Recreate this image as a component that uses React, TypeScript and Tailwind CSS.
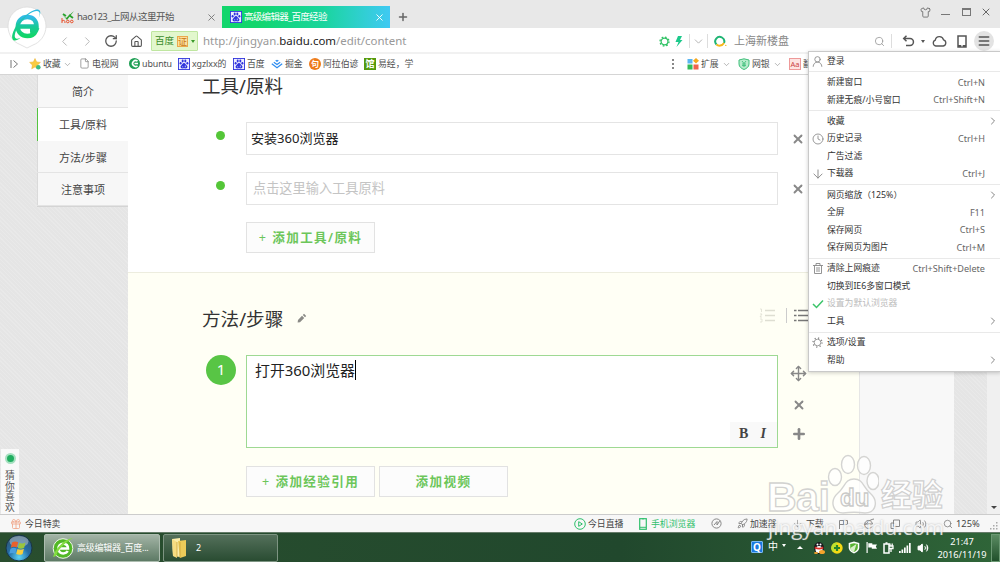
import type { ReactNode } from 'react'
import {
  ArrowDown,
  ChevronDown,
  ChevronLeft,
  ChevronRight,
  Clock,
  File,
  Gift,
  House,
  Menu,
  Move,
  Plus,
  Rocket,
  RotateCw,
  Search,
  Shirt,
  UserRound,
  Volume2,
  X,
} from 'lucide-react'

interface MenuEntry {
  label: string
  keys?: string
  icon?: ReactNode
  sub?: boolean
  muted?: boolean
}

const MENU: MenuEntry[][] = [
  [{ label: '登录', icon: <UserRound size={13} strokeWidth={1.6} /> }],
  [
    { label: '新建窗口', keys: 'Ctrl+N' },
    { label: '新建无痕/小号窗口', keys: 'Ctrl+Shift+N' },
  ],
  [
    { label: '收藏', sub: true },
    { label: '历史记录', keys: 'Ctrl+H', icon: <Clock size={12} strokeWidth={1.7} /> },
    { label: '广告过滤' },
    { label: '下载器', keys: 'Ctrl+J', icon: <ArrowDown size={14} strokeWidth={1.6} /> },
  ],
  [
    { label: '网页缩放（125%）', sub: true },
    { label: '全屏', keys: 'F11' },
    { label: '保存网页', keys: 'Ctrl+S' },
    { label: '保存网页为图片', keys: 'Ctrl+M' },
  ],
  [
    {
      label: '清除上网痕迹',
      keys: 'Ctrl+Shift+Delete',
      icon: (
        <svg width="10" height="11" viewBox="0 0 10 11" fill="none" stroke="currentColor" strokeWidth="0.9">
          <path d="M0 2.500h10M3 2.500V.5h4v2M1.500 2.500v8h7v-8M4 4v5M6 4v5" />
        </svg>
      ),
    },
    { label: '切换到IE6多窗口模式' },
    {
      label: '设置为默认浏览器',
      muted: true,
      icon: (
        <svg width="12" height="10" viewBox="0 0 12 10" fill="none" stroke="#3cc46a" strokeWidth="1.5">
          <path d="M1 5l3.5 3.5L11 1.5" />
        </svg>
      ),
    },
    { label: '工具', sub: true },
  ],
  [
    { label: '选项/设置', icon: <GearOutline /> },
    { label: '帮助', sub: true },
  ],
]

function GearOutline() {
  return (
    <svg width="11" height="11" viewBox="0 0 12 12" fill="none" stroke="currentColor">
      <circle cx="6" cy="6" r="3.6" strokeWidth="0.9" />
      <circle cx="6" cy="6" r="4.9" strokeWidth="1.5" strokeDasharray="1.3 2.55" />
    </svg>
  )
}

function Paw({ size = 12 }: { size?: number }) {
  return (
    <svg width={size} height={size} viewBox="0 0 12 12" className="shrink-0">
      <rect width="12" height="12" fill="#2f34dc" />
      <rect x="0.9" y="0.9" width="10.2" height="10.2" fill="#eef" />
      <g fill="#2f34dc">
        <ellipse cx="2.6" cy="5.2" rx="1" ry="1.3" />
        <ellipse cx="4.7" cy="3" rx="1" ry="1.4" />
        <ellipse cx="7.3" cy="3" rx="1" ry="1.4" />
        <ellipse cx="9.4" cy="5.2" rx="1" ry="1.3" />
        <path d="M6 5C4.5 5 4.3 6.7 3.2 7.5c-1.300 1-.6 3 1 2.900 1.200-.1 2.400-.1 3.600 0 1.600.1 2.300-1.900 1-2.900C7.700 6.700 7.500 5 6 5z" />
      </g>
      <path d="M4.700 8.300v1M7.300 7.600v1.700" stroke="#fff" strokeWidth="0.7" />
    </svg>
  )
}

function BrowserLogo() {
  return (
    <svg width="42" height="44" viewBox="0 0 42 44" className="absolute top-[5px] left-[6px] z-10">
      <defs>
        <linearGradient id="e" x1="0" y1="0" x2="0" y2="1">
          <stop offset="0" stopColor="#2fb9e8" />
          <stop offset="0.5" stopColor="#17c999" />
          <stop offset="1" stopColor="#12d568" />
        </linearGradient>
      </defs>
      <path
        d="M21 2a19 19 0 0 1 19 19c0 10-7 17-13 19l-6 3-7-3.500C7 37 2 29.500 2 21A19 19 0 0 1 21 2z"
        fill="#fff"
        stroke="#dadada"
        strokeWidth="0.8"
      />
      <path
        d="M12.500 21.500h18c0-6-3.500-9.500-9.200-9.500-5.500 0-9.500 4.200-9.500 9.700 0 5.500 4 9.300 9.500 9.300 4.200 0 7.200-2 8.700-5.500h-6"
        fill="none"
        stroke="url(#e)"
        strokeWidth="4.500"
      />
      <path
        d="M32.500 13c2-4 1.500-7-1.500-7-5 0-13 6-18 14-4 6.500-5.500 12-3 13.500 1 .6 2.500.3 4.500-.7-3.500 3.200-7 3.700-8 1.200-1.500-3.500 1.500-11 7-17.500C20 9 28 3.500 32 4.500c3 .8 3 4.500.5 8.500z"
        fill="url(#e)"
      />
    </svg>
  )
}

function TabBar() {
  return (
    <div className="flex h-[28px] items-end bg-[#e8e8e8] text-[9.500px] leading-[22px] text-[#555]">
      <div className="ml-[55px] flex h-[22px] w-[167px] items-center pl-[6px]">
        <svg width="14" height="13" viewBox="0 0 14 13">
          <path d="M1 3l4 4L13 0 6 9z" fill="#29a22d" />
          <path d="M2 3l3 2M8 4l4 3" stroke="#29a22d" strokeWidth="1.800" />
          <path
            d="M1 7v5M1 10q3-2 3 2M5.500 10.500a1.300 1.300 0 1 0 2.600 0 1.300 1.300 0 1 0-2.600 0M9.500 10.500a1.300 1.300 0 1 0 2.600 0 1.300 1.300 0 1 0-2.600 0"
            stroke="#e8502a"
            fill="none"
          />
        </svg>
        <span className="ml-[2px] grow tracking-[-0.500px]">hao123_上网从这里开始</span>
        <X size={11} strokeWidth={2} className="mr-[5px] text-[#777]" />
      </div>
      <div className="flex h-[22px] w-[168px] items-center bg-linear-to-r from-[#12d66c] from-20% via-[#19d59c] via-60% to-[#3fc9f3] pl-[8px] text-white">
        <Paw />
        <span className="ml-[2px] grow tracking-[-0.700px]">高级编辑器_百度经验</span>
        <X size={11} strokeWidth={2} className="mr-[5px]" />
      </div>
      <Plus size={12} strokeWidth={3} className="mb-[5px] ml-[7px] text-[#666]" />
      <div className="mb-[10px] ml-auto flex items-center text-[#666]">
        <Shirt size={11} strokeWidth={1.800} />
        <span className="mt-[4px] ml-[10px] h-px w-[9px] bg-[#777]" />
        <span className="ml-[12px] h-[8px] w-[9px] border border-t-2 border-[#777]" />
        <X size={12} strokeWidth={2} className="mr-[8px] ml-[9px]" />
      </div>
    </div>
  )
}

function AddressBar() {
  return (
    <div className="flex h-[24px] items-center bg-white pt-[2px] text-[#555]">
      <ChevronLeft size={15} strokeWidth={1.600} className="ml-[57px] text-[#bbb]" />
      <ChevronRight size={15} strokeWidth={1.600} className="ml-[8px] text-[#bbb]" />
      <RotateCw size={14} strokeWidth={2.200} className="ml-[9px]" />
      <House size={13} strokeWidth={2} className="ml-[12px]" />
      <div className="ml-[8px] flex h-[20px] w-[47px] items-center rounded-[1px] border border-[#bfe6a0] bg-[#e2f7cd] pl-[3px] text-[9.500px] text-[#3a8a2b]">
        百度
        <span className="ml-[3px] h-[11px] w-[11px] border border-[#eba94c] bg-[#fcdf9c] text-center text-[9px] leading-[9px] text-[#c87813]">证</span>
        <span className="ml-[3px] border-x-[2px] border-t-[3px] border-x-transparent border-t-[#3a9a2b]" />
      </div>
      <div className="ml-[5px] w-[456px] text-[11.450px] leading-[22px] text-[#999]">
        http://jingyan.<span className="text-[#222]">baidu.com</span>/edit/content
      </div>
      <div className="w-[11px] text-[#2ec263]">
        <svg width="11" height="11" viewBox="0 0 11 11" fill="none" stroke="currentColor">
          <circle cx="5.500" cy="5.500" r="3.400" strokeWidth="1.200" />
          <circle cx="5.500" cy="5.500" r="4.500" strokeWidth="1.300" strokeDasharray="1.700 1.830" />
        </svg>
      </div>
      <svg width="8" height="11" viewBox="0 0 8 11" className="ml-[5px]">
        <path d="M3 0h4L5 4h2.500L1.500 11 3.500 6H.5z" fill="#1cc98b" />
      </svg>
      <span className="ml-[6px] h-[14px] w-px bg-[#ddd]" />
      <ChevronDown size={13} strokeWidth={1.600} className="ml-[2px] text-[#aaa]" />
      <span className="ml-[2px] h-[14px] w-px bg-[#ddd]" />
      <svg width="14" height="12" viewBox="0 0 14 12" className="ml-[6px]" fill="none" strokeWidth="2">
        <path d="M2.500 9.500A4.500 4.500 0 1 1 10 8" stroke="#1fb574" />
        <path d="M2.500 9.500c2 1.800 5.500 1.600 7.500-1.500" stroke="#f6b71b" />
        <circle cx="11.800" cy="10.400" r="0.700" fill="#f6b71b" stroke="none" />
      </svg>
      <span className="ml-[6px] w-[141px] text-[11px] text-[#888]">上海新楼盘</span>
      <Search size={11} strokeWidth={1.800} className="ml-[-1px] text-[#999]" />
      <span className="ml-[6px] h-[14px] w-px bg-[#ddd]" />
      <svg width="13" height="12" viewBox="0 0 13 12" className="ml-[10px]" fill="none" stroke="currentColor" strokeWidth="1.500">
        <path d="M2 3.500h6a3.400 3.400 0 0 1 0 6.900H4M4.500 0.800L1.700 3.500l2.800 2.800" />
      </svg>
      <span className="ml-[6px] border-x-[2px] border-t-[3px] border-x-transparent border-t-[#555]" />
      <svg width="15" height="12" viewBox="0 0 15 12" className="ml-[7px]" fill="none" stroke="currentColor" strokeWidth="1.300">
        <path d="M3.800 11A3 3 0 0 1 3.300 5.200a4.200 4.200 0 0 1 8.200-.4A3.200 3.200 0 0 1 11.300 11z" />
      </svg>
      <svg width="10" height="13" viewBox="0 0 10 13" className="ml-[10px]" fill="none" stroke="currentColor">
        <rect x="1" y="1" width="8" height="11" strokeWidth="1.500" />
        <path d="M1 11h8" strokeWidth="2" />
        <path d="M4 10.800h2" stroke="#fff" />
      </svg>
      <span className="ml-[7px] flex size-[20px] items-center justify-center rounded-full bg-[#e3e3e3]">
        <Menu size={14} strokeWidth={2.600} />
      </span>
    </div>
  )
}

function Bookmark({ icon, children }: { icon: ReactNode; children: ReactNode }) {
  return (
    <>
      <span className="flex w-[12px] shrink-0 justify-center">{icon}</span>
      <span className="ml-[2px] shrink-0 whitespace-nowrap">{children}</span>
    </>
  )
}

function Bookmarks() {
  return (
    <div className="flex h-[23px] items-center border-t-2 border-b border-t-[#f1f1f1] border-b-[#d5d5d5] bg-white text-[8.900px] text-[#505050]">
      <svg width="9" height="10" viewBox="0 0 9 10" className="ml-[10px]" fill="none" stroke="#777">
        <path d="M1 1v8M3.500 1.500L7.500 5l-4 3.500" />
      </svg>
      <span className="ml-[10px] flex w-[34px] items-center">
        <Bookmark
          icon={
            <svg width="12" height="12" viewBox="0 0 12 12">
              <path d="M6 .5l1.600 3.400 3.800.5-2.800 2.600.7 3.800L6 9l-3.300 1.800.7-3.800L.6 4.400l3.800-.5z" fill="#f9cb42" stroke="#e6ae2c" strokeWidth=".5" />
              <circle cx="9.300" cy="9.200" r="2.300" fill="#3dbb86" />
            </svg>
          }
        >
          收藏
        </Bookmark>
      </span>
      <ChevronDown size={9} strokeWidth={1.600} className="mr-[6px] shrink-0 text-[#888]" />
      <span className="flex w-[50px] items-center">
        <Bookmark icon={<File size={11} strokeWidth={1.500} className="text-[#777]" />}>电视网</Bookmark>
      </span>
      <span className="flex w-[50px] items-center tracking-[-0.100px]">
        <Bookmark
          icon={
            <svg width="11" height="11" viewBox="0 0 11 11">
              <circle cx="5.500" cy="5.500" r="5.500" fill="#1f9f54" />
              <path d="M8.500 3.200A3 3 0 1 0 8.500 7.800M5.500 5.500h3.500" stroke="#fff" strokeWidth="1.600" fill="none" />
            </svg>
          }
        >
          ubuntu
        </Bookmark>
      </span>
      <span className="flex w-[55px] items-center tracking-[-0.080px]">
        <Bookmark icon={<Paw />}>xgzlxx的</Bookmark>
      </span>
      <span className="flex w-[38px] items-center">
        <Bookmark icon={<Paw />}>百度</Bookmark>
      </span>
      <span className="flex w-[38px] items-center">
        <Bookmark
          icon={
            <svg width="12" height="10" viewBox="0 0 12 10" fill="none" stroke="#2d8cf0" strokeWidth="1.200">
              <path d="M4.700 1.200L6 2.300l1.300-1.100M2.800 3.200L6 5.500l3.200-2.300M.8 4.800L6 8.800l5.200-4" />
            </svg>
          }
        >
          掘金
        </Bookmark>
      </span>
      <span className="flex w-[55px] items-center">
        <Bookmark icon={<span className="size-[12px] rounded-full bg-[#ee7c1c] text-center text-[8px] leading-[12px] font-bold text-white">句</span>}>
          阿拉伯谚
        </Bookmark>
      </span>
      <span className="flex items-center">
        <Bookmark icon={<span className="size-[12px] bg-[#559a0c] text-center text-[9px] leading-[12px] font-bold text-white">馆</span>}>
          易经，学
        </Bookmark>
      </span>
      <span className="mr-[13px] ml-auto flex flex-col gap-[2px]">
        <i className="size-[2px] bg-[#888]" />
        <i className="size-[2px] bg-[#888]" />
        <i className="size-[2px] bg-[#888]" />
      </span>
      <span className="flex w-[33px] items-center">
        <Bookmark
          icon={
            <svg width="12" height="12" viewBox="0 0 12 12">
              <rect x=".5" y="1" width="5" height="4.500" fill="#59b6f2" />
              <rect x=".5" y="6.500" width="5" height="5" fill="#33bb59" />
              <rect x="6.500" y="6.500" width="5" height="5" fill="#f0624d" />
              <path d="M9 0l3 2.800-3 2.800-3-2.800z" fill="#f5a91d" />
            </svg>
          }
        >
          扩展
        </Bookmark>
      </span>
      <ChevronDown size={9} strokeWidth={1.600} className="mr-[7px] ml-[2px] text-[#888]" />
      <span className="flex w-[33px] items-center">
        <Bookmark
          icon={
            <svg width="12" height="12" viewBox="0 0 12 12" fill="#b8eccc" stroke="#3fbf7a">
              <path d="M6 .8L11 2v4c0 3-2.500 4.500-5 5.500C3.500 10.500 1 9 1 6V2z" />
              <path d="M4 3l2 2.500L8 3M6 5.500V9M4 6h4M4 7.600h4" fill="none" strokeWidth=".9" />
            </svg>
          }
        >
          网银
        </Bookmark>
      </span>
      <ChevronDown size={9} strokeWidth={1.600} className="mr-[7px] ml-[2px] text-[#888]" />
      <span className="mr-[179px] flex w-[32px] items-center">
        <Bookmark icon={<span className="h-[12px] w-[12px] border border-[#e99] bg-[#fde4e2] text-center text-[7.500px] leading-[10px] text-[#c44]">Aa</span>}>
          翻译
        </Bookmark>
      </span>
    </div>
  )
}

const TEXTURE = 'bg-[#e5e5e5] bg-[repeating-linear-gradient(45deg,#ffffff24_0_1px,transparent_1px_3px)]'

const NAV = ['简介', '工具/原料', '方法/步骤', '注意事项']

function SideNav() {
  return (
    <aside className={`relative w-[128px] shrink-0 pl-[37px] ${TEXTURE}`}>
      <div className="border-b border-[#d4d4d4] text-center text-[11px] text-[#444]">
        {NAV.map((item) => (
          <div
            key={item}
            className={`flex h-[32.750px] leading-[33px] ${
              item === '工具/原料' ? 'bg-white' : 'border-b border-[#e4e4e4] bg-[#f7f7f7]'
            }`}
          >
            <i className={`w-px ${item === '工具/原料' ? 'bg-[#54c440]' : 'bg-[#dadada]'}`} />
            <span className="grow">{item}</span>
          </div>
        ))}
      </div>
      <div className="absolute bottom-0 left-[1px] flex h-[65px] w-[18px] flex-col items-center bg-[#f9f9f9] text-[#555]">
        <span className="mt-[4px] size-[11px] shrink-0 rounded-full border-2 border-[#a6e0c0] bg-[#21ae60]" />
        <span className="mt-[7px] w-[10px] text-[9.800px] leading-[10.500px]">猜你喜欢</span>
      </div>
    </aside>
  )
}

function GreenButton({ children }: { children: ReactNode }) {
  return (
    <div className="flex h-[31px] w-[129px] items-center justify-center border border-[#e2e2e2] bg-[#fcfcfc] pt-[1px] text-[12.600px] font-semibold tracking-[1.350px] whitespace-pre text-[#6cc65a]">
      {children}
    </div>
  )
}

function AddLabel({ children }: { children: ReactNode }) {
  return (
    <>
      <span className="mr-[5px] font-normal">+</span>
      {children}
    </>
  )
}

function MaterialRow({ children }: { children: ReactNode }) {
  return (
    <div className="flex items-center">
      <span className="mt-[-7px] size-[9px] rounded-full bg-[#54c638]" />
      <div className="ml-[21px] flex h-[33px] w-[532px] items-center border border-[#e4e4e4] pl-[4px] text-[13.050px]">{children}</div>
      <X size={14} strokeWidth={3.200} className="ml-[13px] text-[#888]" />
    </div>
  )
}

function Editor() {
  return (
    <main className="flex w-[732px] shrink-0 flex-col border-r border-[#e6e6e6] bg-white">
      <section className="h-[197px] pl-[74px]">
        <h2 className="text-[18.500px] leading-[22px] text-[#333]">工具/原料</h2>
        <div className="mt-[25px] flex flex-col gap-[17px] pl-[14px]">
          <MaterialRow>
            <span className="text-[#222]">安装360浏览器</span>
          </MaterialRow>
          <MaterialRow>
            <span className="pl-[2px] text-[13.200px] text-[#c4c4c4]">点击这里输入工具原料</span>
          </MaterialRow>
        </div>
        <div className="mt-[17px] ml-[44px]">
          <GreenButton>
            <AddLabel>添加工具/原料</AddLabel>
          </GreenButton>
        </div>
      </section>
      <section className="grow border-t border-[#ededdf] bg-[#fffff5] pl-[74px]">
        <div className="mt-[34px] flex h-[24px] items-center">
          <h2 className="text-[18.600px] leading-[24px] text-[#333]">方法/步骤</h2>
          <svg width="10" height="10" viewBox="0 0 10 10" className="mt-[-2px] ml-[14px]" fill="#8a8a86">
            <path d="M7 .8l2.200 2.200-1.200 1.200L5.800 2zM5 2.800L7.200 5 3 9.200l-2.400.4L1 7z" />
          </svg>
          <svg width="17" height="15" viewBox="0 0 17 15" className="mt-[-8px] ml-auto" stroke="#deded2" fill="none">
            <path d="M6 2.500h10M6 7.500h10M6 12.500h10" strokeWidth="1.500" />
            <path d="M1 1h1.500v3M1 6h2L1 9h2M1 11h2v3H1" strokeWidth=".8" />
          </svg>
          <span className="mt-[-8px] ml-[10px] h-[15px] w-px bg-[#ccc]" />
          <svg width="15" height="15" viewBox="0 0 15 15" className="mt-[-8px] mr-[50px] ml-[7px]" stroke="#777">
            <path d="M0 2.500h2.500M4 2.500h11M0 7.500h2.500M4 7.500h11M0 12.500h2.500M4 12.500h11" strokeWidth="1.500" />
          </svg>
        </div>
        <div className="mt-[24px] flex">
          <span className="ml-[4px] flex size-[30px] items-center justify-center rounded-full bg-[#58c545] pb-[1px] text-[15px] text-white">1</span>
          <div className="ml-[10px] flex h-[93px] w-[532px] flex-col border border-[#9ed993] bg-white">
            <div className="flex h-[28px] items-center pl-[8px] text-[14.900px] text-[#222]">
              打开360浏览器
              <span className="h-[20px] w-px bg-black" />
            </div>
            <div className="mt-auto flex h-[25px] w-[47px] items-center justify-center gap-[12px] self-end bg-[#f9f9f9] pr-[2px] pb-[2px] font-['Liberation_Serif',serif] text-[14px] font-bold text-[#444]">
              <span>B</span>
              <span className="italic">I</span>
            </div>
          </div>
          <div className="ml-[12px] flex flex-col items-center text-[#888]">
            <Move size={17} strokeWidth={2} className="mt-[10px]" />
            <X size={14} strokeWidth={3.200} className="mt-[16px]" />
            <Plus size={16} strokeWidth={4} className="mt-[14px]" />
          </div>
        </div>
        <div className="mt-[18px] ml-[44px] flex gap-[4px]">
          <GreenButton>
            <AddLabel>添加经验引用</AddLabel>
          </GreenButton>
          <GreenButton>添加视频</GreenButton>
        </div>
      </section>
    </main>
  )
}

function BrowserMenu() {
  return (
    <div className="absolute top-[51px] left-[808px] z-20 h-[321px] w-[193px] border border-[#c9c9c9] bg-white text-[8.800px] text-[#333] shadow-[0_1px_4px_rgba(0,0,0,0.200)]">
      {MENU.map((group, i) => (
        <div key={group[0].label} className={i ? 'mt-[1.400px] border-t border-[#e9e9e9] pt-[1.400px]' : 'pt-[0.600px]'}>
          {group.map((entry) => (
            <div key={entry.label} className={`flex h-[17.500px] items-center ${entry.muted ? 'text-[#bbb]' : ''}`}>
              <span className="flex w-[18px] shrink-0 justify-center pr-[1px] text-[#888]">{entry.icon}</span>
              <span className="grow whitespace-nowrap">{entry.label}</span>
              {entry.keys && <span className="mr-[15px] text-[9.100px] text-[#666]">{entry.keys}</span>}
              {entry.sub && <ChevronRight size={12} strokeWidth={1.800} className="mr-[1px] text-[#777]" />}
            </div>
          ))}
        </div>
      ))}
    </div>
  )
}

function StatusBar() {
  return (
    <div className="flex h-[18px] items-center border-t border-[#ccc] bg-[#f7f7f7] text-[8.900px] text-[#444]">
      <Gift size={12} strokeWidth={1.600} className="ml-[10px] text-[#f0a183]" />
      <span className="ml-[3px] w-[549px]">今日特卖</span>
      <svg width="12" height="12" viewBox="0 0 12 12" fill="none" stroke="#2fbf6c">
        <circle cx="6" cy="6" r="5.300" />
        <path d="M4.700 3.700L8.300 6 4.700 8.300z" />
      </svg>
      <span className="ml-[2px] w-[51px]">今日直播</span>
      <svg width="8" height="12" viewBox="0 0 8 12" fill="none" stroke="#2fbf6c">
        <rect x=".7" y=".7" width="6.600" height="10.600" strokeWidth="1.200" />
        <path d="M1 9.300h6M3 .8h2" />
      </svg>
      <span className="ml-[4px] w-[60px] text-[#2fbf6c]">手机浏览器</span>
      <svg width="11" height="11" viewBox="0 0 11 11" fill="none" stroke="#888">
        <circle cx="5.500" cy="5.500" r="4.600" />
        <path d="M3 7l3-3.500V7l3-4.500" />
      </svg>
      <Rocket size={11} strokeWidth={1.700} className="ml-[15px] text-[#777]" />
      <span className="ml-[2px] w-[42px]">加速器</span>
      <ArrowDown size={11} strokeWidth={1.700} className="text-[#999]" />
      <span className="ml-[3px] w-[32px]">下载</span>
      <div className="flex grow items-center gap-[15px] text-[#888]">
        <svg width="10" height="10" viewBox="0 0 10 10" fill="none" stroke="currentColor">
          <path d="M1.500 10V1.500h8v4h-8M5.500 1.500v4" />
        </svg>
        <svg width="12" height="11" viewBox="0 0 12 11" fill="none" stroke="currentColor">
          <path d="M2 6h7.500a4 4 0 1 0-.5 2.500M1 10C0 8 6 1.500 11 1" />
        </svg>
        <svg width="10" height="10" viewBox="0 0 10 10" fill="none" stroke="currentColor">
          <path d="M3.500 1h6v6.500h-6zM3.500 4H1v5.500h3" />
        </svg>
        <Volume2 size={12} strokeWidth={1.700} />
      </div>
      <Search size={10} strokeWidth={1.800} className="text-[#777]" />
      <span className="ml-[3px] w-[34px] text-[9.300px]">125%</span>
      <svg width="8" height="8" viewBox="0 0 8 8" className="mt-[4px] mr-[2px]" fill="#aaa">
        <path d="M6 0h1.500v1.500H6zM3 3h1.500v1.500H3zM6 3h1.500v1.500H6zM0 6h1.500v1.500H0zM3 6h1.500v1.500H3zM6 6h1.500v1.500H6z" />
      </svg>
    </div>
  )
}

function Taskbar() {
  return (
    <div className="flex h-[30px] items-center border-t border-[#657b69] bg-linear-to-r from-[#294e2e] via-[#21482d] via-62% to-[#2f6538] text-[9px] text-white">
      <svg width="28" height="28" viewBox="0 0 28 28" className="ml-[5px]">
        <defs>
          <radialGradient id="orb" cx="0.5" cy="0.85" r="0.8">
            <stop offset="0" stopColor="#5dd3f3" />
            <stop offset="0.5" stopColor="#236da8" />
            <stop offset="1" stopColor="#335670" />
          </radialGradient>
        </defs>
        <circle cx="14" cy="14" r="13" fill="url(#orb)" stroke="#183545" />
        <ellipse cx="14" cy="7.500" rx="9.500" ry="5.500" fill="#fff" opacity="0.350" />
        <path d="M7 8.500c2-1.300 4-1.300 6.200-.2l-1.400 5.200c-2-1-4-.9-6 .2z" fill="#e9612c" />
        <path d="M14.200 8.700c2 1 4 1 6.300-.2l-1.300 5.200c-2.200 1.200-4.400 1.200-6.400.2z" fill="#9ac53d" />
        <path d="M5.500 14.800c2-1.200 4-1.200 6-.2l-1.300 5c-2-1-4-.9-6 .2z" fill="#4aa0e0" />
        <path d="M12.500 15c2 1 4.300 1 6.400-.2l-1.300 5.200c-2.200 1.200-4.400 1-6.400 0z" fill="#f8cd3c" />
      </svg>
      <div className="ml-[11px] flex h-[28px] w-[116px] items-center rounded-[2px] border border-[#adbdb0] bg-linear-to-b from-[#a3b4a6] to-[#5d7a65] pl-[7px]">
        <svg width="22" height="22" viewBox="0 0 22 22">
          <circle cx="11" cy="11.500" r="9.800" fill="#52b826" stroke="#eef7e9" />
          <path d="M6.500 11.500h9.500c0-3-2-4.800-4.700-4.800-3 0-4.900 2-4.900 4.800s2 4.900 4.900 4.900c2 0 3.600-.9 4.400-2.400" fill="none" stroke="#fff" strokeWidth="2.500" />
          <path d="M1 20C3 12 12 2 21 1c-5 3-14 9-17 18z" fill="#83dc40" />
        </svg>
        <span className="ml-[3px] tracking-[-0.250px]">高级编辑器_百度...</span>
      </div>
      <div className="ml-[3px] flex h-[28px] w-[115px] items-center rounded-[2px] border border-[#7d9482] bg-linear-to-b from-[#54705b] to-[#294c32] pl-[7px]">
        <svg width="17" height="22" viewBox="0 0 17 22">
          <path d="M1 2l8-1v19l-7-1z" fill="#fbedaa" />
          <path d="M7 4l8-1v16l-6 2z" fill="#eccb59" />
          <path d="M1 2l5 3v16l-4-2z" fill="#f6dc81" />
          <path d="M9 5v16M6 5v15" stroke="#c79e34" strokeWidth=".7" />
        </svg>
        <span className="ml-[8px]">2</span>
      </div>
      <span className="mr-[5px] mb-[2px] ml-auto size-[12px] rounded-[1px] border border-[#77b9f3] bg-[#1a79df] text-center text-[10px] leading-[10px] font-bold">Q</span>
      <span className="mr-[4px] mb-[2px] text-[10px]">中</span>
      <span className="mr-[11px] mb-[4px] border-x-[2px] border-t-[3px] border-x-transparent border-t-white" />
      <span className="mr-[10px] border-x-[3px] border-b-[3px] border-x-transparent border-b-white" />
      <div className="mr-[8px] flex items-center gap-[5.700px]">
        <svg width="12" height="13" viewBox="0 0 12 13">
          <ellipse cx="6" cy="7" rx="5" ry="6" fill="#18181c" />
          <ellipse cx="6" cy="8.500" rx="3.500" ry="3.500" fill="#fff" />
          <path d="M2 5.500q4 2.500 8 0l.5 2q-4 2-9 0z" fill="#dd3028" />
          <ellipse cx="9" cy="11" rx="3" ry="2" fill="#f5a42b" />
          <ellipse cx="3" cy="12" rx="2" ry="1" fill="#f5a42b" />
          <circle cx="4.500" cy="3.500" r="1" fill="#fff" />
          <circle cx="7.500" cy="3.500" r="1" fill="#fff" />
        </svg>
        <svg width="12" height="12" viewBox="0 0 12 12">
          <circle cx="6" cy="6" r="5.700" fill="#f5d914" />
          <path d="M6 .5A5.500 5.500 0 0 0 2 10L6 6z" fill="#bfe12e" />
          <path d="M6 3v6M3 6h6" stroke="#27842b" strokeWidth="2.200" />
        </svg>
        <svg width="12" height="13" viewBox="0 0 12 13">
          <path d="M6 .6L11.300 2v4.500c0 3-2.800 5-5.300 6C3.500 11.500.7 9.500.7 6.500V2z" fill="#fff" />
          <path d="M6 2.200L9.800 3v3.500c0 2-1.800 3.500-3.800 4.500-2-1-3.800-2.500-3.800-4.500V3z" fill="#58b332" />
          <path d="M8.500 3L6 11c-2-1-3.500-2.300-3.700-4z" fill="#d9efc9" />
        </svg>
        <svg width="11" height="11" viewBox="0 0 11 11" fill="#fff">
          <path d="M.5 0h1.200v11H.5zM2.300 1.200h4v1.200H11L9.800 4.500 11 6.700H5.800V5.500H2.300z" />
        </svg>
        <svg width="11" height="12" viewBox="0 0 11 12" fill="none" stroke="#fff">
          <rect x="1" y="2" width="5" height="9" strokeWidth="1.500" />
          <path d="M2.500 1h2M6 4h4v2.500H6M7 1.500V4M9.200 1.500V4M8 6.500V10" strokeWidth="1.300" />
        </svg>
        <svg width="12" height="10" viewBox="0 0 12 10" fill="#fff">
          <path d="M0 8h1.700v2H0zM2.500 6.500h1.700V10H2.500zM5 4.500h1.700V10H5zM7.500 2.500h1.700V10H7.500zM10 0h1.700v10H10z" />
        </svg>
        <Volume2 size={12} fill="white" strokeWidth={1.800} />
      </div>
      <div className="mr-[4px] w-[50px] text-center text-[9.200px] leading-[13px]">
        <div>21:47</div>
        <div>2016/11/19</div>
      </div>
      <div className="h-[28px] w-[9px] border border-[#6b9873] bg-linear-to-b from-[#5b8c63] to-[#20502b]" />
    </div>
  )
}

function Watermark() {
  return (
    <div className="pointer-events-none absolute top-[452px] left-[765px] z-30 h-[90px] w-[190px] font-['Liberation_Sans','Noto_Sans_CJK_SC',sans-serif] font-bold text-white/80">
      <svg width="52" height="62" viewBox="0 0 52 62" className="absolute top-[2px] left-[62px]" fill="#fff" fillOpacity="0.700" stroke="#d4d4d2" strokeWidth="1.400">
        <ellipse cx="8" cy="23" rx="6.500" ry="8.500" />
        <ellipse cx="21" cy="10.500" rx="6.500" ry="9" />
        <ellipse cx="37" cy="11.500" rx="6.500" ry="9" />
        <ellipse cx="46" cy="27" rx="6" ry="8.500" />
        <path d="M27 25c-9 0-9 8-16 14-9 8-5 20 5 20 8-1 14-1 22 0 11 0 14-12 5-20-7-6-7-14-16-14z" />
      </svg>
      <span className="absolute top-[24px] left-[2px] text-[41px] leading-[42px] tracking-[-0.500px] [-webkit-text-stroke:1.300px_#d2d2d0]">Bai</span>
      <span className="absolute top-[33px] left-[75px] text-[24px] leading-[26px] [-webkit-text-stroke:1.300px_#cacac8]">du</span>
      <span className="absolute top-[27px] left-[116px] text-[31px] leading-[34px] [-webkit-text-stroke:1.200px_#d0d0d0]">经验</span>
      <span className="absolute top-[62px] left-[3px] font-['Open_Sans',sans-serif] text-[20.700px] leading-[26px] font-normal whitespace-nowrap [text-shadow:0_0_2px_rgba(120,120,120,0.500)]">
        jingyan.baidu.com
      </span>
    </div>
  )
}

export default function App() {
  return (
    <div className="relative flex h-[562px] w-[1000px] flex-col overflow-hidden bg-white font-['Noto_Sans','Noto_Sans_CJK_SC',sans-serif]">
      <TabBar />
      <AddressBar />
      <Bookmarks />
      <div className="flex h-[439px]">
        <SideNav />
        <Editor />
        <div className="w-[94px] bg-[#f8f8f8]" />
        <div className={`w-[33px] ${TEXTURE}`} />
        <div className="flex w-[13px] items-end justify-center bg-[#f0f0f0] pb-[5px]">
          <span className="border-x-[3px] border-t-[3px] border-x-transparent border-t-[#444]" />
        </div>
      </div>
      <StatusBar />
      <Taskbar />
      <BrowserLogo />
      <BrowserMenu />
      <Watermark />
    </div>
  )
}
